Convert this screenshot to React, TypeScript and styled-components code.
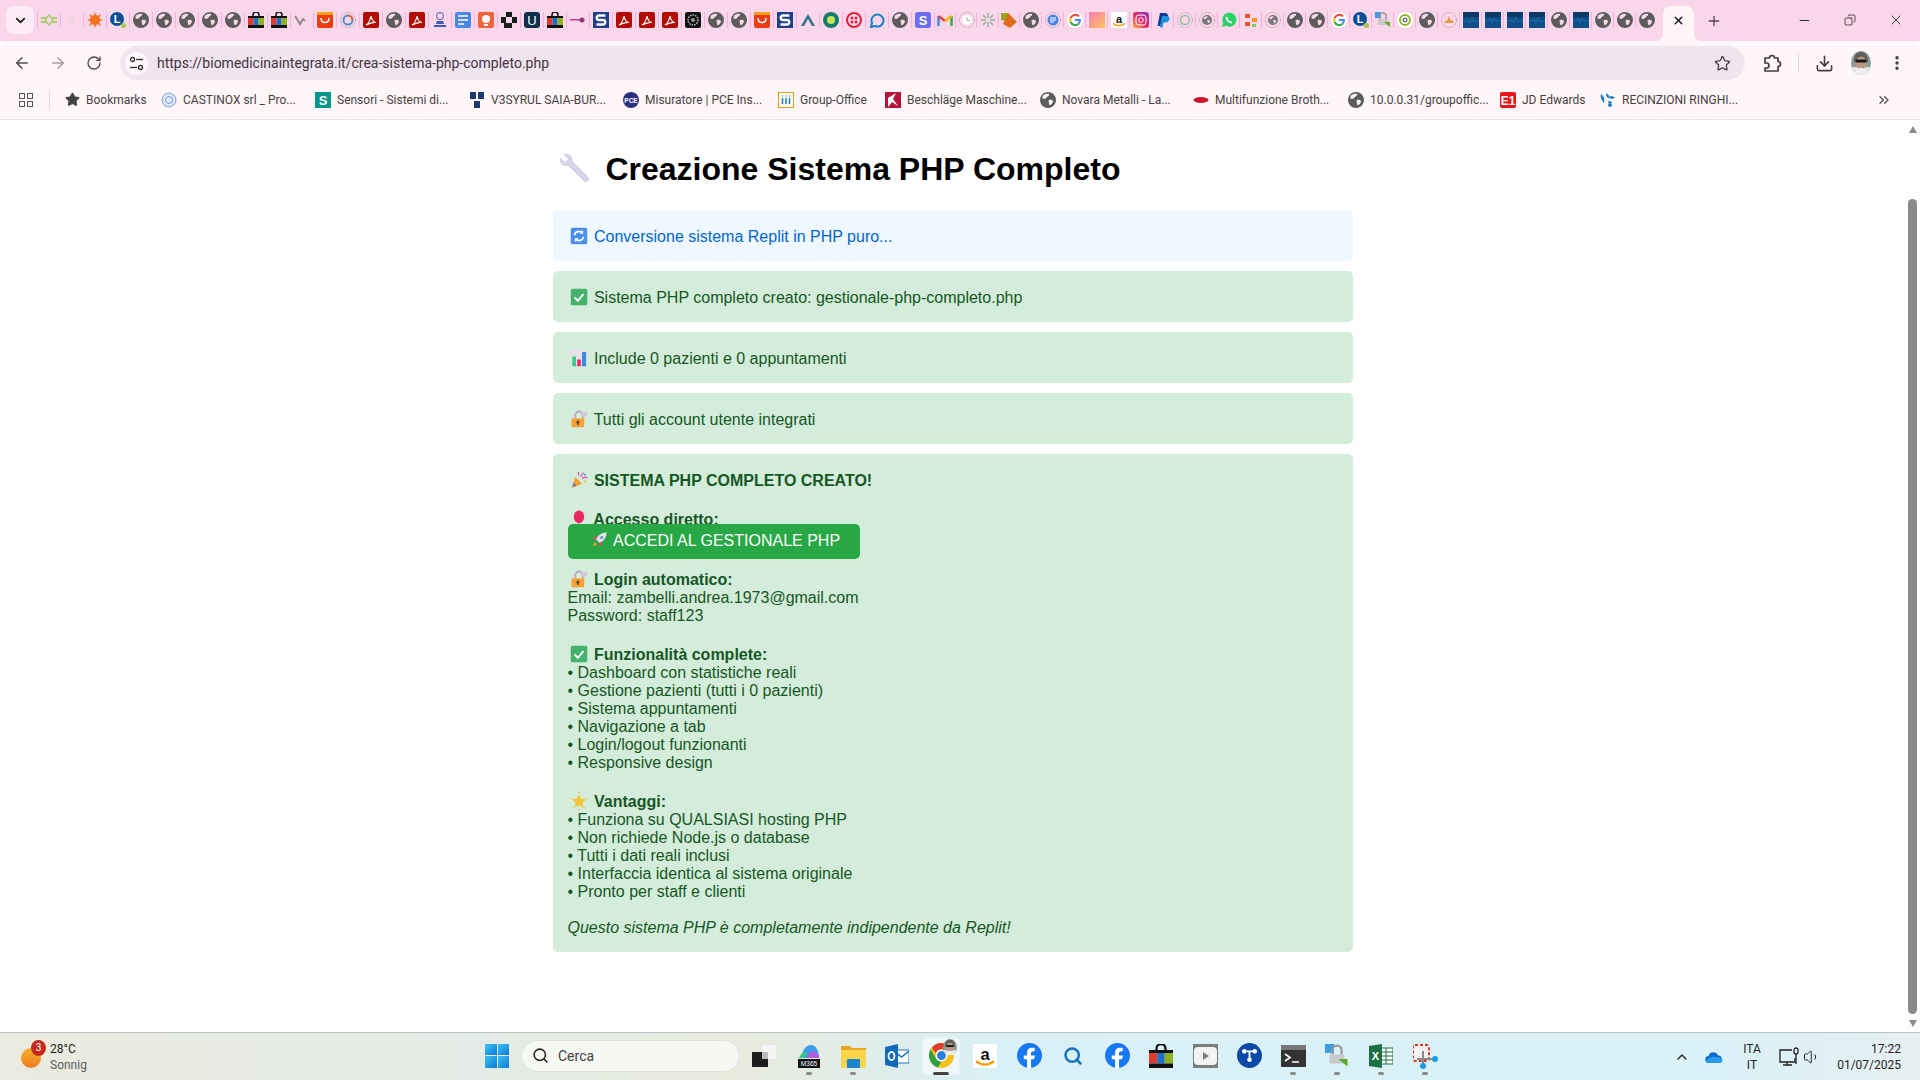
import React from 'react';
import styled, { createGlobalStyle } from 'styled-components';
import {
  ArrowLeft,
  ArrowRight,
  ChevronDown,
  ChevronUp,
  ChevronsRight,
  Copy,
  Download,
  MoreVertical,
  Minus,
  Plus,
  RotateCw,
  Search,
  Star,
  Volume1,
  X,
} from 'lucide-react';

const GlobalStyle = createGlobalStyle`
  html, body { margin: 0; padding: 0; overflow: hidden; background: #fff; }
  * { box-sizing: border-box; }
`;

const Screen = styled.div`
  width: 1920px;
  height: 1080px;
  display: flex;
  flex-direction: column;
  overflow: hidden;
  font-family: 'Liberation Sans', Arial, sans-serif;
`;

/* ---------- favicons ---------- */

const GLOBE =
  'M8 0a8 8 0 1 0 0 16A8 8 0 0 0 8 0Z M3 3.5C5 2 7 1.5 9 2c.5 1-.5 2-1.5 2.5-1 .5-1 1.5-2 2S3.500 7 2.500 6.500C2.300 5.500 2.500 4.500 3 3.500Z M9 8c1.500-.5 3.500 0 4 1 0 1.500-1 3-2.500 4-1 .5-1.500-.5-1.500-1.500S8 9 9 8Z';

const Txt: React.FC<{ x: number; y: number; s: number; c: string; b?: boolean; children: React.ReactNode }> = ({ x, y, s, c, b, children }) => (
  <text x={x} y={y} fontSize={s} fill={c} fontWeight={b ? 700 : 400} fontFamily="'Liberation Sans', sans-serif" textAnchor="middle">
    {children}
  </text>
);

const favicons: Record<string, React.ReactNode> = {
  globe: <path d={GLOBE} fill="#5c5c5c" fillRule="evenodd" />,
  bars: (
    <g fill="#a5cf6a">
      <rect x="0" y="5" width="6" height="2" />
      <rect x="0" y="9" width="6" height="2" />
      <rect x="10" y="5" width="6" height="2" />
      <rect x="10" y="9" width="6" height="2" />
      <path d="M8 3l4 5-4 5-4-5z" fill="none" stroke="#a5cf6a" strokeWidth="1.500" />
    </g>
  ),
  faint: <path d="M8 3v3M6 9h4M7 12h3" stroke="#e4d9e0" strokeWidth="2" />,
  sun: (
    <g fill="#f0741e">
      <circle cx="8" cy="8" r="5" />
      <path d="M8 0l1.500 4h-3zM8 16l1.500-4h-3zM0 8l4-1.500v3zM16 8l-4-1.500v3zM2 2l4 2-2 2zM14 2l-4 2 2 2zM2 14l4-2-2-2zM14 14l-4-2 2-2z" />
    </g>
  ),
  L: (
    <g>
      <circle cx="7" cy="7" r="7" fill="#0b4f97" />
      <Txt x={7} y={11} s={11} c="#fff" b>L</Txt>
      <circle cx="13.500" cy="13.500" r="2.500" fill="#a6c94a" />
    </g>
  ),
  bag: (
    <g>
      <path d="M5 5V3a3 3 0 0 1 6 0v2" fill="none" stroke="#111" strokeWidth="1.500" />
      <rect x="0" y="4" width="16" height="2" fill="#111" />
      <rect x="0" y="6" width="5.500" height="7" fill="#e03a2f" />
      <rect x="5.500" y="6" width="5" height="7" fill="#1d6fc4" />
      <rect x="10.500" y="6" width="5.500" height="7" fill="#8fb020" />
      <rect x="0" y="13" width="16" height="3" fill="#111" />
    </g>
  ),
  vee: <path d="M1 4l5 8 3-5 2 2" fill="none" stroke="#8d8d8d" strokeWidth="2" />,
  ali: (
    <g>
      <rect width="16" height="16" rx="2" fill="#ee3c12" />
      <rect width="16" height="3" fill="#f9a01b" />
      <path d="M4 6c0 6 8 6 8 0" fill="none" stroke="#fff" strokeWidth="1.500" />
    </g>
  ),
  ring: (
    <g fill="none">
      <circle cx="8" cy="8" r="7.500" stroke="#c5a9bd" strokeWidth="1" strokeDasharray="2 1" />
      <circle cx="8" cy="8" r="4.500" stroke="#4a90c8" strokeWidth="2" />
      <path d="M8 3.500a4.500 4.500 0 0 1 4.500 4.500" stroke="#e86a33" strokeWidth="2" />
    </g>
  ),
  pdf: (
    <g>
      <rect width="16" height="16" rx="2" fill="#b30b00" />
      <path d="M3 13c2-1 4-4 5-9 .5 3 2 6 5 6.500-3-.5-6 .5-10 2.500Z" fill="none" stroke="#fff" strokeWidth="1.200" />
    </g>
  ),
  figure: (
    <g fill="#3d59b5">
      <circle cx="8" cy="4" r="3.500" fill="none" stroke="#3d59b5" />
      <path d="M5 9h6l1 3H4zM2 13h12v2H2z" />
    </g>
  ),
  doc: (
    <g>
      <rect width="16" height="16" rx="2" fill="#4a86e8" />
      <path d="M3 4h10M3 8h10M3 12h6" stroke="#fff" strokeWidth="1.600" />
    </g>
  ),
  bulb: (
    <g>
      <rect width="16" height="16" rx="2" fill="#f0623a" />
      <circle cx="8" cy="7" r="4" fill="#fff" />
      <rect x="6" y="12" width="4" height="2" fill="#fff" />
    </g>
  ),
  blackshape: <path d="M5 0h6v5h5v6h-5v5H3v-5H0V5h5Zm0 5v6h6V5Z" fill="#142019" fillRule="evenodd" />,
  u: (
    <g>
      <rect width="16" height="16" rx="3" fill="#0e2f4c" />
      <Txt x={8} y={13} s={13} c="#fff">U</Txt>
    </g>
  ),
  dash: (
    <g>
      <rect x="0" y="7" width="10" height="1.500" fill="#c39" />
      <circle cx="12" cy="8" r="2.500" fill="#933a6d" />
    </g>
  ),
  sNavy: (
    <g>
      <rect width="16" height="16" fill="#1f3f8a" />
      <path d="M12.500 3.500H6a2 2 0 0 0 0 4.500h4a2 2 0 0 1 0 4.500H3.500" fill="none" stroke="#fff" strokeWidth="2.400" />
    </g>
  ),
  seal: (
    <g>
      <rect width="16" height="16" rx="2" fill="#111" />
      <circle cx="8" cy="8" r="5" fill="none" stroke="#bbb" strokeWidth="1.500" strokeDasharray="1.500 1" />
      <circle cx="8" cy="8" r="2" fill="#999" />
    </g>
  ),
  peak: <path d="M1 14L8 2l7 12h-3L8 7l-4 7Z" fill="#2d7591" />,
  tealdot: (
    <g>
      <circle cx="8" cy="8" r="8" fill="#147a6b" />
      <circle cx="8" cy="8" r="4" fill="#c5e35d" />
    </g>
  ),
  redcircle: (
    <g fill="#e3223c">
      <path d="M8 0a8 8 0 1 0 0 16A8 8 0 0 0 8 0Zm0 2a6 6 0 1 1 0 12A6 6 0 0 1 8 2Z" />
      <circle cx="6" cy="6" r="1.500" />
      <circle cx="10" cy="6" r="1.500" />
      <circle cx="6" cy="10" r="1.500" />
      <circle cx="10" cy="10" r="1.500" />
    </g>
  ),
  dBlue: <path d="M2 15l1-4a6 6 0 1 1 3 3Z" fill="none" stroke="#1284c4" strokeWidth="2" />,
  sPurple: (
    <g>
      <rect width="16" height="16" rx="3" fill="#6c6cf5" />
      <Txt x={8} y={13} s={13} c="#fff" b>S</Txt>
    </g>
  ),
  gmail: (
    <g fill="none" strokeWidth="2.500">
      <path d="M1.500 14V4" stroke="#4285f4" />
      <path d="M14.500 14V4" stroke="#34a853" />
      <path d="M1.500 4L8 9" stroke="#ea4335" />
      <path d="M8 9l6.500-5" stroke="#f6b704" />
    </g>
  ),
  ringClock: (
    <g fill="none">
      <circle cx="8" cy="8" r="7.500" stroke="#b9a9b4" strokeDasharray="2 1" />
      <circle cx="8" cy="8" r="5" fill="#fff" />
      <path d="M8 5v3.500h3" stroke="#aaa" />
    </g>
  ),
  star: <path d="M8 1v5M8 10v5M1 8h5M10 8h5M3 3l3 3M10 10l3 3M13 3l-3 3M6 10l-3 3" stroke="#8fb89a" strokeWidth="1.500" />,
  kite: (
    <g>
      <path d="M0 1h8L5 9 0 8Z" fill="#96a824" />
      <path d="M7 1l9 9-7 6-7-4Z" fill="#df6a1a" />
    </g>
  ),
  docRing: (
    <g fill="none">
      <circle cx="8" cy="8" r="7.500" stroke="#b9a9b4" strokeDasharray="2 1" />
      <circle cx="8" cy="8" r="5.500" fill="#4a86e8" />
      <path d="M5 6h6M5 8h6M5 10h4" stroke="#fff" />
    </g>
  ),
  google: (
    <g>
      <circle cx="8" cy="8" r="8" fill="#fff" />
      <path d="M12 4.500A5 5 0 0 0 3.600 6" fill="none" stroke="#ea4335" strokeWidth="2" />
      <path d="M3.600 6a5 5 0 0 0 0 4" fill="none" stroke="#fbbc05" strokeWidth="2" />
      <path d="M3.600 10a5 5 0 0 0 8 1.800" fill="none" stroke="#34a853" strokeWidth="2" />
      <path d="M11.600 11.800A5 5 0 0 0 13 8H8" fill="none" stroke="#4285f4" strokeWidth="2" />
    </g>
  ),
  pinkGrad: (
    <g>
      <defs>
        <linearGradient id="pinkGradFill" x1="0" y1="0" x2="1" y2="1">
          <stop offset="0" stopColor="#f77fb6" />
          <stop offset="1" stopColor="#fbc45a" />
        </linearGradient>
      </defs>
      <rect width="16" height="16" fill="url(#pinkGradFill)" />
    </g>
  ),
  amazon: (
    <g>
      <rect width="16" height="16" fill="#fff" />
      <Txt x={8} y={10.500} s={11} c="#111" b>a</Txt>
      <path d="M2 11.500c4 3 8 3 12 0" fill="none" stroke="#f90" strokeWidth="1.500" />
    </g>
  ),
  insta: (
    <g>
      <defs>
        <linearGradient id="instaFill" x1="0" y1="1" x2="1" y2="0">
          <stop offset="0" stopColor="#fdb13b" />
          <stop offset="0.5" stopColor="#e5266e" />
          <stop offset="1" stopColor="#8a3ac8" />
        </linearGradient>
      </defs>
      <rect width="16" height="16" rx="3" fill="url(#instaFill)" />
      <rect x="3" y="3" width="10" height="10" rx="3" fill="none" stroke="#fff" />
      <circle cx="8" cy="8" r="2.300" fill="none" stroke="#fff" />
    </g>
  ),
  paypal: (
    <g>
      <path d="M5 1h5a3 3 0 0 1 3 4c-.5 2.500-2 3.500-5 3.500H6.500L5.500 14H2.500Z" fill="#0a3d91" />
      <path d="M7 4h5a2.500 2.500 0 0 1 2.500 3c-.5 2.500-2 3.500-4.500 3.500H8.500L7.500 15.500H5Z" fill="#1f8fdc" />
    </g>
  ),
  waRing: (
    <g fill="none">
      <circle cx="8" cy="8" r="7.500" stroke="#b9a9b4" strokeDasharray="2 1" />
      <circle cx="8" cy="8" r="4.500" stroke="#8cbf9b" strokeWidth="1.500" />
    </g>
  ),
  ringGrey: (
    <g fill="none">
      <circle cx="8" cy="8" r="7.500" stroke="#b9a9b4" strokeDasharray="2 1" />
      <path d={GLOBE} transform="translate(3 3) scale(0.625)" fill="#777" fillRule="evenodd" />
    </g>
  ),
  whatsapp: (
    <g>
      <path d="M1 15l1.200-4A7 7 0 1 1 5 13.800Z" fill="#25d366" />
      <path d="M5.500 5c0 3 2.500 5.500 5.500 5.500" fill="none" stroke="#fff" strokeWidth="2" />
    </g>
  ),
  dots: (
    <g>
      <rect x="2" y="2" width="5" height="4" fill="#e8562a" />
      <rect x="9" y="6" width="5" height="4" fill="#f59b23" />
      <rect x="2" y="10" width="5" height="4" fill="#e8562a" />
      <rect x="9" y="12" width="4" height="3" fill="#7ccf5b" />
    </g>
  ),
  lockArrow: (
    <g>
      <rect x="0" y="0" width="6" height="6" fill="#3b9de0" />
      <path d="M5 7V4a3 3 0 0 1 6 0v3" fill="none" stroke="#999" strokeWidth="1.500" />
      <rect x="3" y="7" width="10" height="6" fill="#c9c9c9" />
      <path d="M9 10l6 5v-5z" fill="#56a92a" />
    </g>
  ),
  greenRing: (
    <g fill="none">
      <circle cx="8" cy="8" r="8" fill="#fff" />
      <circle cx="8" cy="8" r="5" stroke="#8cb82a" strokeWidth="2" />
      <circle cx="8" cy="8" r="2" stroke="#333" />
    </g>
  ),
  orangeRing: (
    <g fill="none">
      <circle cx="8" cy="8" r="7.500" stroke="#b9a9b4" strokeDasharray="2 1" />
      <path d="M3 11l2-3 1 1 2-5 2 5 1-1 2 3Z" fill="#ef9a3a" />
    </g>
  ),
  wave: (
    <g>
      <rect width="16" height="16" fill="#0d4f86" />
      <rect width="16" height="5" fill="#0a3a66" />
      <path d="M0 9h4l1-2 2 4 2-5 1 3h6" fill="none" stroke="#2f7fb8" strokeWidth="0.600" />
    </g>
  ),
  castinox: (
    <g fill="none" stroke="#7d9fdc">
      <circle cx="8" cy="8" r="7" fill="#dfe8f8" />
      <circle cx="8" cy="8" r="3.500" />
    </g>
  ),
  sTeal: (
    <g>
      <rect width="16" height="16" fill="#00968a" />
      <Txt x={8} y={13} s={13} c="#fff" b>S</Txt>
    </g>
  ),
  v3: (
    <g fill="#1c3a6e">
      <rect x="1" y="0" width="6" height="7" />
      <rect x="9" y="0" width="6" height="7" />
      <rect x="5" y="9" width="6" height="7" />
    </g>
  ),
  pce: (
    <g>
      <circle cx="8" cy="8" r="8" fill="#2a2f7f" />
      <Txt x={8} y={10.500} s={6.500} c="#fff" b>PCE</Txt>
    </g>
  ),
  group: (
    <g>
      <rect x="0.500" y="0.500" width="15" height="15" fill="#fff" stroke="#e69a1c" />
      <path d="M4.500 6v6M8 6v6M11.500 6v6" stroke="#1d7fa8" strokeWidth="1.500" />
      <path d="M4.500 3.500v1M8 3.500v1M11.500 3.500v1" stroke="#5d8a24" strokeWidth="1.500" />
    </g>
  ),
  besch: (
    <g>
      <rect width="16" height="16" fill="#b5173c" />
      <path d="M3 15V6l8-5-3 6 5 7-6-4Z" fill="#fff" />
    </g>
  ),
  multi: <ellipse cx="8" cy="8" rx="7.500" ry="3" fill="#c8152b" />,
  e1: (
    <g>
      <rect width="16" height="16" rx="2" fill="#e8161b" />
      <Txt x={8} y={13} s={12} c="#fff" b>E1</Txt>
    </g>
  ),
  recin: (
    <g fill="#1b7fc0">
      <path d="M1 2c3 2 4 5 3 9-2-2-4-5-3-9ZM6 1c2 1 4 3 3 5-2 0-3-2-3-5ZM11 4c2 0 3 1 4 2-2 1-4 1-6 0 0-1 1-2 2-2ZM9 9c2 0 3 1 3 2-2 1-4 0-4-1ZM8 13a2 2 0 1 0 4 0 2 2 0 0 0-4 0Z" />
    </g>
  ),
};

const Fav: React.FC<{ kind: string; size?: number }> = ({ kind, size = 16 }) => (
  <svg width={size} height={size} viewBox="0 0 16 16" style={{ flex: 'none', display: 'block' }}>
    {favicons[kind]}
  </svg>
);

/* ---------- tab strip ---------- */

const tabKinds = [
  'bars', 'faint', 'sun', 'L', 'globe', 'globe', 'globe', 'globe', 'globe', 'bag', 'bag', 'vee', 'ali', 'ring', 'pdf', 'globe',
  'pdf', 'figure', 'doc', 'bulb', 'blackshape', 'u', 'bag', 'dash', 'sNavy', 'pdf', 'pdf', 'pdf', 'seal', 'globe', 'globe', 'ali',
  'sNavy', 'peak', 'tealdot', 'redcircle', 'dBlue', 'globe', 'sPurple', 'gmail', 'ringClock', 'star', 'kite', 'globe', 'docRing',
  'google', 'pinkGrad', 'amazon', 'insta', 'paypal', 'waRing', 'ringGrey', 'whatsapp', 'dots', 'ringGrey', 'globe', 'globe',
  'google', 'L', 'lockArrow', 'greenRing', 'globe', 'orangeRing', 'wave', 'wave', 'wave', 'wave', 'globe', 'wave', 'globe', 'globe', 'globe',
];

// the strip narrows its tabs part way along
const tabWidth = (i: number) => (i < 39 ? 23 : i < 43 ? 21.4 : 22);

const TabStrip = styled.div`
  height: 41px;
  flex: none;
  display: flex;
  align-items: flex-start;
  background: #fad6ea;
  padding-left: 6px;
  color: #3d2b38;
`;

const TabSearch = styled.div`
  width: 28px;
  height: 28px;
  margin-top: 6px;
  border-radius: 8px;
  background: #fdecf5;
  display: flex;
  align-items: center;
  justify-content: center;
`;

const TabList = styled.div`
  display: flex;
  margin-left: 3.500px;
  padding-top: 12px;
`;

const TabCell = styled.div<{ $w: number }>`
  width: ${p => p.$w}px;
  height: 16px;
  flex: none;
  display: flex;
  justify-content: center;
  box-shadow: -1px 0 0 #f6b1dc;
`;

const ActiveTab = styled.div`
  position: relative;
  width: 31px;
  height: 35px;
  margin-top: 6px;
  margin-left: 4.900px;
  background: #fff6f8;
  border-radius: 8px 8px 0 0;
  display: flex;
  align-items: center;
  justify-content: center;
  padding-bottom: 7px;

  &::before,
  &::after {
    content: '';
    position: absolute;
    bottom: 0;
    width: 8px;
    height: 8px;
  }
  &::before {
    left: -8px;
    background: radial-gradient(circle at 0 0, transparent 8px, #fff6f8 8.500px);
  }
  &::after {
    right: -8px;
    background: radial-gradient(circle at 100% 0, transparent 8px, #fff6f8 8.500px);
  }
`;

const NewTab = styled.div`
  margin: 12px 0 0 11px;
  width: 18px;
  height: 18px;
  display: flex;
  align-items: center;
  justify-content: center;
`;

const WindowControls = styled.div`
  margin-left: auto;
  display: flex;
  height: 40px;
  padding-right: 1px;
`;

const WindowControl = styled.div`
  width: 46px;
  display: flex;
  align-items: center;
  justify-content: center;
`;

/* ---------- toolbar ---------- */

const Toolbar = styled.div`
  height: 40px;
  flex: none;
  background: #fff6f8;
  border-radius: 8px 8px 0 0;
  display: flex;
  align-items: flex-start;
  padding: 5px 0 0 13px;
  color: #5a4653;
`;

const NavButtons = styled.div`
  display: flex;
  gap: 18px;
  height: 34px;
  align-items: center;
`;

const Reload = styled.span`
  display: flex;
  margin-left: 1px;
`;

const Omnibox = styled.div`
  width: 1625px;
  height: 34px;
  margin-left: 18px;
  border-radius: 17px;
  background: #f0e5ee;
  display: flex;
  align-items: center;
  padding: 0 14px 0 5px;
`;

const SiteChip = styled.div`
  width: 23px;
  height: 23px;
  border-radius: 50%;
  background: #fff8fb;
  display: flex;
  align-items: center;
  justify-content: center;
  flex: none;
`;

const UrlText = styled.div`
  margin-left: 9px;
  flex: 1;
  font: 14px Roboto, sans-serif;
  color: #46323f;
`;

const ToolIcons = styled.div`
  display: flex;
  height: 34px;
  align-items: center;
  margin-left: 18px;
  gap: 17px;
`;

const ToolDivider = styled.div`
  width: 1px;
  height: 20px;
  background: #f5cfe2;
  margin: 0 -1px;
`;

const BookmarkBar = styled.div`
  height: 39px;
  flex: none;
  background: #fff6f8;
  border-bottom: 1px solid #f4dfe8;
  display: flex;
  align-items: center;
  padding-left: 19px;
  padding-bottom: 1px;
  color: #444;
`;

const AppsGrid = styled.div`
  width: 14px;
  height: 14px;
  flex: none;
  display: grid;
  grid-template-columns: 6px 6px;
  gap: 2px;
  & > i {
    display: block;
    border: 1.500px solid #555;
  }
`;

const BarDivider = styled.div`
  width: 1px;
  height: 20px;
  background: #f8cfe4;
  margin: 0 15px 0 16px;
`;

const Bookmark = styled.div<{ $w: number }>`
  width: ${p => p.$w}px;
  flex: none;
  display: flex;
  align-items: center;
  gap: 6px;
  font: 12px Roboto, sans-serif;
  white-space: nowrap;
  color: #474043;
`;

const bookmarks = [
  { icon: 'castinox', label: 'CASTINOX srl _ Pro...', w: 154 },
  { icon: 'sTeal', label: 'Sensori - Sistemi di...', w: 154 },
  { icon: 'v3', label: 'V3SYRUL SAIA-BUR...', w: 154 },
  { icon: 'pce', label: 'Misuratore | PCE Ins...', w: 155 },
  { icon: 'group', label: 'Group-Office', w: 107 },
  { icon: 'besch', label: 'Beschläge Maschine...', w: 155 },
  { icon: 'globe', label: 'Novara Metalli - La...', w: 153 },
  { icon: 'multi', label: 'Multifunzione Broth...', w: 155 },
  { icon: 'globe', label: '10.0.0.31/groupoffic...', w: 152 },
  { icon: 'e1', label: 'JD Edwards', w: 100 },
  { icon: 'recin', label: 'RECINZIONI RINGHI...', w: 154 },
];

const MoreBookmarks = styled.div`
  margin-left: auto;
  padding-right: 28px;
  display: flex;
`;

/* ---------- page ---------- */

const Viewport = styled.div`
  flex: 1;
  min-height: 0;
  display: flex;
  background: #fff;
`;

const PageArea = styled.main`
  flex: 1;
  min-width: 0;
`;

const Container = styled.div`
  width: 800px;
  margin: 0 auto;
  font: 16px/18px 'Liberation Sans', Arial, sans-serif;
`;

const Title = styled.h1`
  margin: 28px 0 20px;
  font-size: 32px;
  line-height: 42px;
  font-weight: 700;
  color: #000;
  white-space: nowrap;
`;

const Card = styled.div<{ $tone?: 'info' | 'success' }>`
  margin-bottom: 10px;
  padding: 15px;
  border-radius: 5px;
  background: ${p => (p.$tone === 'info' ? '#f0f8ff' : '#d4edda')};
  color: ${p => (p.$tone === 'info' ? '#0066cc' : '#155724')};
`;

const Line = styled.div<{ $tall?: boolean }>`
  height: ${p => (p.$tall ? 21 : 18)}px;
  line-height: ${p => (p.$tall ? 23 : 18)}px;
  white-space: pre;
`;

const ButtonLine = styled.div`
  height: 21px;
  line-height: 24px;
  white-space: pre;
`;

const EmojiSlot = styled.span<{ $w: number }>`
  display: inline-flex;
  width: ${p => p.$w}px;
  justify-content: center;
  align-items: center;
  vertical-align: ${p => (p.$w > 30 ? '-6px' : '-3px')};
  height: ${p => (p.$w > 30 ? 30 : 16)}px;
`;

const AccessButton = styled.a`
  background: #28a745;
  color: #fff;
  padding: 8px 20px 10px;
  border-radius: 5px;
  text-decoration: none;
`;

const emojis: Record<string, React.ReactNode> = {
  wrench: (
    <path d="M2 4.500l3 3 2.500-2.500-3-3c3-1 6 1 5.500 4.500l11 11c.8.8.8 2 0 2.800s-2 .8-2.800 0l-11-11C3.200 10.200 1 7.500 2 4.500Z" fill="#d8d3ea" stroke="#c9c3df" strokeWidth="0.500" />
  ),
  refresh: (
    <g>
      <rect x="1" y="1" width="22" height="22" rx="2.500" fill="#4a90e8" />
      <path d="M6 11a6 6 0 0 1 10.500-3M18 13a6 6 0 0 1-10.500 3" fill="none" stroke="#fff" strokeWidth="2.200" />
      <path d="M17.500 4v5h-5zM6.500 20v-5h5z" fill="#fff" />
    </g>
  ),
  check: (
    <g>
      <rect x="1" y="1" width="22" height="22" rx="2" fill="#46b16c" />
      <path d="M6 12.500l4.500 4.500L18 8" fill="none" stroke="#fff" strokeWidth="2.500" />
    </g>
  ),
  chart: (
    <g>
      <rect x="1" y="1" width="22" height="22" rx="1.500" fill="#e6e1e8" />
      <rect x="3" y="10" width="5" height="13" fill="#3fc78a" />
      <rect x="9.500" y="14" width="5" height="9" fill="#e8316b" />
      <rect x="16" y="4" width="5.500" height="19" fill="#3a8dde" />
    </g>
  ),
  lock: (
    <g>
      <path d="M7 11V7a5 5 0 0 1 10 0v4" fill="none" stroke="#b9a9c0" strokeWidth="2.500" />
      <path d="M14 3l9-1v6l-5 2z" fill="#cfc8d6" />
      <rect x="2" y="11" width="17" height="12" rx="1.500" fill="#f5a133" />
      <circle cx="10.500" cy="16" r="2" fill="#5b3a18" />
      <rect x="9.600" y="16" width="1.800" height="4" fill="#5b3a18" />
    </g>
  ),
  party: (
    <g>
      <path d="M2 23L7 8l9 9Z" fill="#f0a030" />
      <path d="M4.500 15.500l4 4-3 1.200-2-2Z" fill="#5577d8" />
      <path d="M11 6c1-2 1-3 0-5M16 10c2-2 4-2 7-1M14 8l4-6" fill="none" stroke="#e8489a" strokeWidth="1.600" />
      <circle cx="20" cy="5" r="1.500" fill="#3fa9e8" />
      <circle cx="20" cy="14" r="1.500" fill="#f0c030" />
    </g>
  ),
  balloon: (
    <g>
      <ellipse cx="12" cy="9" rx="7" ry="8.500" fill="#e8285f" />
      <path d="M12 17.500L10 20h4Z" fill="#e8285f" />
    </g>
  ),
  rocket: (
    <g>
      <path d="M22 2c-6 0-11 3-14 9l5 5c6-3 9-8 9-14Z" fill="#e3e0ec" />
      <circle cx="15.500" cy="8.500" r="2" fill="#5a9be0" />
      <path d="M8 11l-5 1 3-4 4-1ZM13 16l-1 5 4-3 1-4Z" fill="#e8486a" />
      <path d="M7 15c-2 1-3 4-3 5 1 0 4-1 5-3Z" fill="#f5a133" />
    </g>
  ),
  sparkle: (
    <g>
      <path d="M12 3l3 6 6.500.8-4.800 4.500 1.300 6.700-6-3.300-6 3.300 1.300-6.700L2.500 9.800 9 9Z" fill="#f5c63a" />
      <path d="M12 0v2M12 22v2M0 8l2 .8M24 8l-2 .8M3 22l1.500-1.500M21 22l-1.500-1.500" stroke="#f5b53a" strokeWidth="1.500" />
    </g>
  ),
};

const Emoji: React.FC<{ name: string; size?: number }> = ({ name, size = 18 }) => (
  <EmojiSlot $w={size > 20 ? 44 : 22}>
    <svg width={size} height={size} viewBox="0 0 24 24" style={{ display: 'block', flex: 'none' }}>
      {emojis[name]}
    </svg>
  </EmojiSlot>
);

/* ---------- scrollbar ---------- */

const Scrollbar = styled.div`
  width: 15px;
  flex: none;
  background: #fdfdfd;
  display: flex;
  flex-direction: column;
  align-items: center;
  padding-top: 6px;
`;

const ArrowUp = styled.div`
  width: 0;
  height: 0;
  border-left: 4.500px solid transparent;
  border-right: 4.500px solid transparent;
  border-bottom: 7px solid #8a8a8a;
`;

const ArrowDown = styled(ArrowUp)`
  transform: rotate(180deg);
  margin-top: 6px;
`;

const Thumb = styled.div`
  width: 9px;
  height: 815px;
  margin-top: 66px;
  border-radius: 5px;
  background: #8a8a8a;
`;

/* ---------- taskbar ---------- */

const Taskbar = styled.footer`
  height: 48px;
  flex: none;
  border-top: 1px solid #b8c2c4;
  background: linear-gradient(90deg, #ebebdf 0%, #e3ebe6 25%, #e8eadc 38%, #d8f0f6 52%, #daf1f7 90%, #e6f0f2 100%);
  display: flex;
  align-items: center;
  padding-bottom: 2px;
  color: #1d1d1d;
  font: 12px Roboto, sans-serif;
`;

const Weather = styled.div`
  width: 485px;
  flex: none;
  display: flex;
  align-items: center;
  padding-left: 21px;
  margin-top: 2px;
`;

const WeatherIcon = styled.div`
  position: relative;
  width: 20px;
  height: 20px;
  margin-top: 3px;
  border-radius: 50%;
  background: linear-gradient(180deg, #f6b22b, #ef7b22);
`;

const WeatherBadge = styled.span`
  position: absolute;
  top: -8px;
  left: 10px;
  width: 15px;
  height: 16px;
  border-radius: 50%;
  background: #c42b1c;
  color: #fff;
  font-size: 10px;
  line-height: 16px;
  text-align: center;
`;

const WeatherText = styled.div`
  margin-left: 9px;
  line-height: 16px;
`;

const Muted = styled.div`
  color: #5d5d5d;
`;

const WinLogo = styled.div`
  width: 24px;
  height: 24px;
  flex: none;
  display: grid;
  grid-template-columns: 11.500px 11.500px;
  grid-auto-rows: 11.500px;
  gap: 1px;
  & > i {
    display: block;
    background: linear-gradient(135deg, #3cc4f5, #0a78d8);
  }
`;

const SearchBox = styled.div`
  width: 219px;
  height: 32px;
  flex: none;
  margin-left: 12px;
  border-radius: 16px;
  border: 1px solid #dde3df;
  background: #f6f8f3;
  display: flex;
  align-items: center;
  gap: 9px;
  padding-left: 10px;
  font-size: 14px;
  color: #444;
`;

const TaskIcons = styled.div`
  display: flex;
  margin-left: 3px;
`;

const TaskCell = styled.div<{ $active?: boolean; $dot?: boolean }>`
  position: relative;
  width: 44px;
  height: 38px;
  flex: none;
  display: flex;
  align-items: center;
  justify-content: center;
  border-radius: 4px;
  ${p => p.$active && 'background: #eef8fb; box-shadow: 0 0 0 1px #e6f2f6 inset; width: 38px; margin: 0 3px;'}

  &::after {
    content: '';
    display: ${p => (p.$dot || p.$active ? 'block' : 'none')};
    position: absolute;
    bottom: 0;
    left: 50%;
    transform: translateX(-50%);
    height: 3px;
    border-radius: 2px;
    width: ${p => (p.$active ? 16 : 6)}px;
    background: ${p => (p.$active ? '#444' : '#888')};
  }
`;

const ChromeAvatar = styled.div`
  position: absolute;
  top: 2px;
  right: 3px;
`;

const Tray = styled.div`
  margin-left: auto;
  margin-top: 2px;
  display: flex;
  align-items: center;
  padding-right: 19px;
  color: #222;
`;

const TrayChevron = styled.div`
  display: flex;
  margin-right: 15px;
`;

const LangBlock = styled.div`
  width: 32px;
  margin: 0 11px 0 13px;
  text-align: center;
  line-height: 16px;
`;

const Speaker = styled.div`
  display: flex;
  margin: 0 10px 0 2px;
`;

const Clock = styled.div`
  width: 70px;
  text-align: right;
  line-height: 16px;
`;

const ProfilePhoto: React.FC<{ size: number }> = ({ size }) => (
  <svg width={size} height={size * 1.2} viewBox="0 0 20 24" style={{ display: 'block', flex: 'none' }}>
    <defs>
      <clipPath id={`face${size}`}>
        <ellipse cx="10" cy="12" rx="10" ry="12" />
      </clipPath>
    </defs>
    <g clipPath={`url(#face${size})`}>
      <rect width="20" height="24" fill="#8d9a98" />
      <rect y="16" width="20" height="8" fill="#dfe5e4" />
      <path d="M3 8a7 7 0 0 1 14 0v3H3Z" fill="#5c5f5e" />
      <ellipse cx="10" cy="12" rx="5.500" ry="6.500" fill="#bd9680" />
      <rect x="4.500" y="8.500" width="11" height="3" rx="1" fill="#1b1b1b" />
      <path d="M4 24c0-6 3-7 6-7s6 1 6 7Z" fill="#eef0f0" />
    </g>
  </svg>
);

const ChromeLogo = () => (
  <svg width="25" height="25" viewBox="0 0 24 24">
    <circle cx="12" cy="12" r="12" fill="#f2c21a" />
    <path d="M12 0a12 12 0 0 1 10.400 6H12a6 6 0 0 0-5.600 3.800L2.600 4.500A12 12 0 0 1 12 0Z" fill="#e33b2e" />
    <path d="M1.600 6l5.200 9a6 6 0 0 0 5.200 3l-3.500 5.500A12 12 0 0 1 1.600 6Z" fill="#2f9e44" />
    <circle cx="12" cy="12" r="5" fill="#2a7de1" stroke="#fff" strokeWidth="1.500" />
  </svg>
);

const taskIcon: Record<string, React.ReactNode> = {
  m365: (
    <svg width="22" height="24" viewBox="0 0 22 24">
      <path d="M3 14C5 4 9 1 13 1c5 0 8 6 8 13Z" fill="#3a9de8" />
      <path d="M9 14c1-5 5-8 8-6s4 3 4 6Z" fill="#b35ddc" />
      <path d="M1 14c2-5 5-7 8-5l-2 5Z" fill="#37c48a" />
      <rect y="15" width="22" height="9" fill="#111" />
      <text x="11" y="22" fontSize="6.500" fill="#fff" textAnchor="middle" fontFamily="'Liberation Sans', sans-serif">M365</text>
    </svg>
  ),
  folder: (
    <svg width="25" height="24" viewBox="0 0 25 24">
      <path d="M0 2h9l2 2h14v20H0Z" fill="#e5a81e" />
      <rect y="6" width="25" height="18" fill="#fbd54a" />
      <rect x="6" y="15" width="13" height="9" rx="1" fill="#1a86d0" />
    </svg>
  ),
  outlook: (
    <svg width="24" height="24" viewBox="0 0 24 24">
      <rect x="9" y="6" width="15" height="13" fill="#fff" stroke="#1a72c4" />
      <path d="M9 7l7.500 6L24 7" fill="none" stroke="#1a72c4" strokeWidth="1.500" />
      <path d="M0 3l13-3v24L0 21Z" fill="#0f6cbd" />
      <ellipse cx="6.500" cy="12" rx="3" ry="4" fill="none" stroke="#fff" strokeWidth="1.800" />
    </svg>
  ),
  facebook: (
    <svg width="25" height="25" viewBox="0 0 24 24">
      <circle cx="12" cy="12" r="12" fill="#1877f2" />
      <path d="M16.500 15.500l.6-3.500h-3.600V9.700c0-1 .5-1.900 2-1.900H17V4.800s-1.400-.2-2.700-.2c-2.800 0-4.600 1.700-4.600 4.700V12H6.500v3.500h3.200V24h3.800v-8.500Z" fill="#fff" />
    </svg>
  ),
  lens: <Search size={20} color="#1a72b8" strokeWidth={3} />,
  play: (
    <svg width="25" height="24" viewBox="0 0 25 24">
      <rect width="25" height="24" fill="#7d7d7d" />
      <rect x="1" y="3" width="23" height="18" rx="4" fill="#f2f2f2" />
      <path d="M10 8l6 4-6 4Z" fill="#7d7d7d" />
    </svg>
  ),
  share: (
    <svg width="25" height="25" viewBox="0 0 24 24">
      <circle cx="12" cy="12" r="12" fill="#0a4aa6" />
      <path d="M7 8h10M12 8v8" stroke="#fff" strokeWidth="1.800" />
      <circle cx="7" cy="8" r="2.200" fill="#fff" />
      <circle cx="17" cy="8" r="2.200" fill="#fff" />
      <circle cx="12" cy="16" r="2.200" fill="#fff" />
    </svg>
  ),
  terminal: (
    <svg width="25" height="22" viewBox="0 0 25 22">
      <rect width="25" height="22" rx="1" fill="#333" />
      <rect width="25" height="5" fill="#777" />
      <path d="M4 9l5 3.500L4 16M11 17h7" fill="none" stroke="#fff" strokeWidth="1.600" />
    </svg>
  ),
  excel: (
    <svg width="24" height="24" viewBox="0 0 24 24">
      <rect x="10" y="4" width="14" height="16" fill="#fff" stroke="#1d7044" />
      <path d="M10 8h14M10 12h14M10 16h14M17 4v16" stroke="#1d7044" />
      <path d="M0 2l13-2v24L0 22Z" fill="#1d7044" />
      <text x="6.500" y="16" fontSize="11" fontWeight="700" fill="#fff" textAnchor="middle" fontFamily="'Liberation Sans', sans-serif">X</text>
    </svg>
  ),
  snip: (
    <svg width="25" height="26" viewBox="0 0 25 26">
      <rect x="0" y="2" width="16" height="16" rx="2" fill="#f2f2f2" stroke="#d33c1f" strokeDasharray="3 2" strokeWidth="2" />
      <path d="M10 8v14M4 16h18" stroke="#8a8a8a" strokeWidth="2" />
      <circle cx="22" cy="16" r="3" fill="#1a9be0" />
      <circle cx="10" cy="23" r="3" fill="#1a9be0" />
    </svg>
  ),
};

const SiteInfoIcon = () => (
  <svg width="15" height="15" viewBox="0 0 15 15" fill="none" stroke="#3d2b38" strokeWidth="1.300">
    <circle cx="3.500" cy="3.500" r="2" />
    <path d="M7 3.500h7" />
    <circle cx="11.500" cy="11.500" r="2" />
    <path d="M1 11.500h7" />
  </svg>
);

const ExtensionIcon = () => (
  <svg width="19" height="19" viewBox="0 0 19 19" fill="none" stroke="#4a3843" strokeWidth="1.700">
    <path d="M2 4h4.500a2.500 2.500 0 0 1 5 0H15v3.500a2.500 2.500 0 0 1 0 5V17H2v-3h1.500a2 2 0 0 0 0-5H2Z" strokeLinejoin="round" />
  </svg>
);

const NetworkIcon = () => (
  <svg width="22" height="20" viewBox="0 0 22 20" fill="none" stroke="#222" strokeWidth="1.300">
    <path d="M13 3H1v12h15v-4" />
    <path d="M8 15v3M4 18h9" />
    <rect x="15" y="1" width="4" height="6" rx="2" />
    <path d="M17 7v10" />
  </svg>
);

const OneDrive = () => (
  <svg width="18" height="12" viewBox="0 0 18 12">
    <path d="M4 12a3.500 3.500 0 0 1-.5-7A5 5 0 0 1 13 4.500a3.800 3.800 0 0 1 1 7.500Z" fill="#0f6cc9" />
    <path d="M1 10c2-4 10-6 16-2 1 2 0 4-3 4H4c-1.500 0-2.500-1-3-2Z" fill="#2b9be8" />
  </svg>
);

const resultLines = {
  features: ['Dashboard con statistiche reali', 'Gestione pazienti (tutti i 0 pazienti)', 'Sistema appuntamenti', 'Navigazione a tab', 'Login/logout funzionanti', 'Responsive design'],
  benefits: ['Funziona su QUALSIASI hosting PHP', 'Non richiede Node.js o database', 'Tutti i dati reali inclusi', 'Interfaccia identica al sistema originale', 'Pronto per staff e clienti'],
};

const App: React.FC = () => {
  return (
    <Screen>
      <GlobalStyle />
      <TabStrip>
        <TabSearch>
          <ChevronDown size={15} strokeWidth={3} color="#222" />
        </TabSearch>
        <TabList>
          {tabKinds.map((kind, i) => (
            <TabCell key={i} $w={tabWidth(i)}>
              <Fav kind={kind} />
            </TabCell>
          ))}
        </TabList>
        <ActiveTab>
          <X size={13} strokeWidth={3} color="#222" />
        </ActiveTab>
        <NewTab>
          <Plus size={16} strokeWidth={2} color="#5a4653" />
        </NewTab>
        <WindowControls>
          <WindowControl>
            <Minus size={15} strokeWidth={1.500} color="#222" />
          </WindowControl>
          <WindowControl>
            <Copy size={12} strokeWidth={1.500} color="#222" style={{ transform: 'scaleX(-1)' }} />
          </WindowControl>
          <WindowControl>
            <X size={16} strokeWidth={1.300} color="#222" />
          </WindowControl>
        </WindowControls>
      </TabStrip>

      <Toolbar>
        <NavButtons>
          <ArrowLeft size={18} strokeWidth={2} color="#5a4653" />
          <ArrowRight size={18} strokeWidth={2} color="#a89aa4" />
          <Reload>
            <RotateCw size={16} strokeWidth={2} color="#5a4653" />
          </Reload>
        </NavButtons>
        <Omnibox>
          <SiteChip>
            <SiteInfoIcon />
          </SiteChip>
          <UrlText>https://biomedicinaintegrata.it/crea-sistema-php-completo.php</UrlText>
          <Star size={17} strokeWidth={1.800} color="#4a3843" />
        </Omnibox>
        <ToolIcons>
          <ExtensionIcon />
          <ToolDivider />
          <Download size={19} strokeWidth={2} color="#4a3843" />
          <ProfilePhoto size={20} />
          <MoreVertical size={18} strokeWidth={2.500} color="#4a3843" />
        </ToolIcons>
      </Toolbar>

      <BookmarkBar>
        <AppsGrid>
          <i />
          <i />
          <i />
          <i />
        </AppsGrid>
        <BarDivider />
        <Bookmark $w={96}>
          <Star size={15} fill="#444" color="#444" />
          Bookmarks
        </Bookmark>
        {bookmarks.map(b => (
          <Bookmark key={b.label} $w={b.w}>
            <Fav kind={b.icon} />
            {b.label}
          </Bookmark>
        ))}
        <MoreBookmarks>
          <ChevronsRight size={16} strokeWidth={2} color="#555" />
        </MoreBookmarks>
      </BookmarkBar>

      <Viewport>
        <PageArea>
          <Container>
            <Title>
              <Emoji name="wrench" size={34} /> Creazione Sistema PHP Completo
            </Title>
            <Card $tone="info">
              <Line $tall>
                <Emoji name="refresh" /> Conversione sistema Replit in PHP puro...
              </Line>
            </Card>
            <Card>
              <Line $tall>
                <Emoji name="check" /> Sistema PHP completo creato: gestionale-php-completo.php
              </Line>
            </Card>
            <Card>
              <Line $tall>
                <Emoji name="chart" /> Include 0 pazienti e 0 appuntamenti
              </Line>
            </Card>
            <Card>
              <Line $tall>
                <Emoji name="lock" /> Tutti gli account utente integrati
              </Line>
            </Card>
            <Card>
              <Line $tall>
                <strong>
                  <Emoji name="party" /> SISTEMA PHP COMPLETO CREATO!
                </strong>
              </Line>
              <Line />
              <Line $tall>
                <strong>
                  <Emoji name="balloon" /> Accesso diretto:
                </strong>
              </Line>
              <ButtonLine>
                <AccessButton href="#">
                  <Emoji name="rocket" /> ACCEDI AL GESTIONALE PHP
                </AccessButton>
              </ButtonLine>
              <Line />
              <Line $tall>
                <strong>
                  <Emoji name="lock" /> Login automatico:
                </strong>
              </Line>
              <Line>Email: zambelli.andrea.1973@gmail.com</Line>
              <Line>Password: staff123</Line>
              <Line />
              <Line $tall>
                <strong>
                  <Emoji name="check" /> Funzionalità complete:
                </strong>
              </Line>
              {resultLines.features.map(t => (
                <Line key={t}>• {t}</Line>
              ))}
              <Line />
              <Line $tall>
                <strong>
                  <Emoji name="sparkle" /> Vantaggi:
                </strong>
              </Line>
              {resultLines.benefits.map(t => (
                <Line key={t}>• {t}</Line>
              ))}
              <Line />
              <Line>
                <em>Questo sistema PHP è completamente indipendente da Replit!</em>
              </Line>
            </Card>
          </Container>
        </PageArea>
        <Scrollbar>
          <ArrowUp />
          <Thumb />
          <ArrowDown />
        </Scrollbar>
      </Viewport>

      <Taskbar>
        <Weather>
          <WeatherIcon>
            <WeatherBadge>3</WeatherBadge>
          </WeatherIcon>
          <WeatherText>
            <div>28°C</div>
            <Muted>Sonnig</Muted>
          </WeatherText>
        </Weather>
        <WinLogo>
          <i />
          <i />
          <i />
          <i />
        </WinLogo>
        <SearchBox>
          <Search size={17} strokeWidth={2.200} color="#222" />
          Cerca
        </SearchBox>
        <TaskIcons>
          <TaskCell>
            <svg width="26" height="22" viewBox="0 0 26 22">
              <rect x="10" y="0" width="14" height="14" fill="#f5f5f5" />
              <rect x="0" y="7" width="16" height="15" fill="#1c1c1c" />
              <rect x="10" y="7" width="6" height="7" fill="#bcbcbc" />
            </svg>
          </TaskCell>
          <TaskCell $dot>{taskIcon.m365}</TaskCell>
          <TaskCell $dot>{taskIcon.folder}</TaskCell>
          <TaskCell>{taskIcon.outlook}</TaskCell>
          <TaskCell $active>
            <ChromeLogo />
            <ChromeAvatar>
              <ProfilePhoto size={14} />
            </ChromeAvatar>
          </TaskCell>
          <TaskCell>
            <Fav kind="amazon" size={24} />
          </TaskCell>
          <TaskCell>{taskIcon.facebook}</TaskCell>
          <TaskCell>{taskIcon.lens}</TaskCell>
          <TaskCell>{taskIcon.facebook}</TaskCell>
          <TaskCell>
            <Fav kind="bag" size={24} />
          </TaskCell>
          <TaskCell>{taskIcon.play}</TaskCell>
          <TaskCell>{taskIcon.share}</TaskCell>
          <TaskCell $dot>{taskIcon.terminal}</TaskCell>
          <TaskCell $dot>
            <Fav kind="lockArrow" size={24} />
          </TaskCell>
          <TaskCell $dot>{taskIcon.excel}</TaskCell>
          <TaskCell $dot>{taskIcon.snip}</TaskCell>
        </TaskIcons>
        <Tray>
          <TrayChevron>
            <ChevronUp size={16} strokeWidth={2} color="#222" />
          </TrayChevron>
          <OneDrive />
          <LangBlock>
            <div>ITA</div>
            <div>IT</div>
          </LangBlock>
          <NetworkIcon />
          <Speaker>
            <Volume1 size={18} strokeWidth={1.300} color="#222" />
          </Speaker>
          <Clock>
            <div>17:22</div>
            <div>01/07/2025</div>
          </Clock>
        </Tray>
      </Taskbar>
    </Screen>
  );
};

export default App;
